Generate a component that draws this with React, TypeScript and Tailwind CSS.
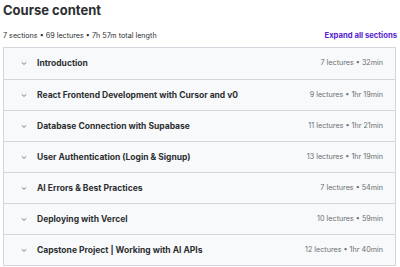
const sections = [
  { title: "Introduction", meta: "7 lectures • 32min" },
  { title: "React Frontend Development with Cursor and v0", meta: "9 lectures • 1hr 19min" },
  { title: "Database Connection with Supabase", meta: "11 lectures • 1hr 21min" },
  { title: "User Authentication (Login & Signup)", meta: "13 lectures • 1hr 19min" },
  { title: "AI Errors & Best Practices", meta: "7 lectures • 54min" },
  { title: "Deploying with Vercel", meta: "10 lectures • 59min" },
  { title: "Capstone Project | Working with AI APIs", meta: "12 lectures • 1hr 40min" },
];

const Chevron = () => (
  <svg width="6" height="5" viewBox="0 0 6 5" className="shrink-0">
    <path d="M0.8 1.4 L3 3.4 L5.2 1.4" fill="none" stroke="#6a6f73" strokeWidth="0.9" />
  </svg>
);

export default function App() {
  return (
    <div className="w-[400px] h-[267px] bg-white px-[3px] pt-[1px] text-[#2d2f31] font-['Inter','Liberation_Sans',sans-serif] overflow-hidden">
      <h2 className="text-[13px] font-bold leading-[18px]">Course content</h2>
      <div className="mt-[11px] flex items-center justify-between h-[12px]">
        <span className="text-[7.2px] text-[#2d2f31]">7 sections • 69 lectures • 7h 57m total length</span>
        <span className="text-[7.7px] font-bold text-[#5624d0]">Expand all sections</span>
      </div>
      <div className="mt-[5px] w-[393px] border border-[#d1d7dc] bg-[#f7f9fa]">
        {sections.map((s, i) => (
          <div
            key={s.title}
            className={`flex items-center h-[31px] pl-[17px] pr-[12px] ${i > 0 ? "border-t border-[#d1d7dc]" : ""}`}
          >
            <Chevron />
            <span className="ml-[10px] text-[8.5px] font-bold">{s.title}</span>
            <span className="ml-auto text-[7.2px] text-[#6a6f73]">{s.meta}</span>
          </div>
        ))}
      </div>
    </div>
  );
}
